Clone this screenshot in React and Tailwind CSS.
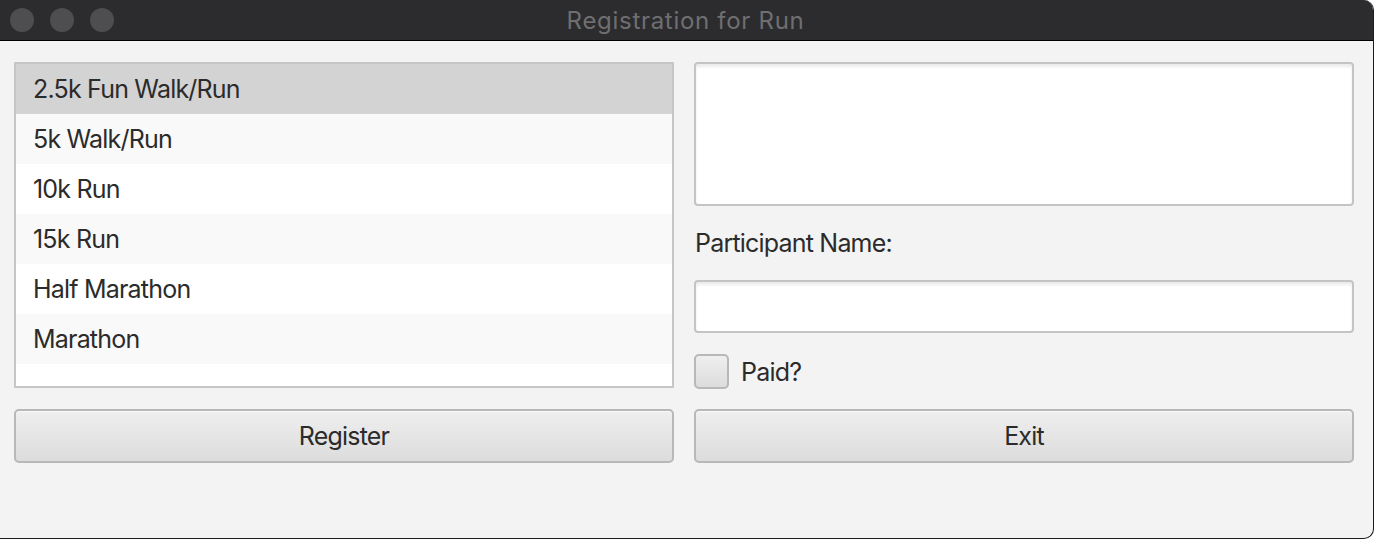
import React from "react";

const items = ["2.5k Fun Walk/Run", "5k Walk/Run", "10k Run", "15k Run", "Half Marathon", "Marathon"];
const rowBg = ["bg-[#d3d3d3]", "bg-[#f9f9f9]", "bg-white", "bg-[#f9f9f9]", "bg-white", "bg-[#f9f9f9]"];

export default function App() {
  return (
    <div className="w-[1376px] h-[540px] bg-white overflow-hidden" style={{ fontFamily: "Inter, 'Noto Sans', sans-serif" }}>
      <div className="w-[1374px] h-[539px] flex flex-col rounded-tr-[10px] rounded-br-[10px] border-r border-b border-[#1c1c1c] overflow-hidden bg-[#f3f3f3]">
        <div className="relative h-[41px] shrink-0 bg-[#2c2c2e] border-b border-black flex items-center justify-center">
          <div className="absolute left-[10px] top-[8px] flex gap-[16px]">
            <div className="w-[24px] h-[24px] rounded-full bg-[#4e4e50]" />
            <div className="w-[24px] h-[24px] rounded-full bg-[#4e4e50]" />
            <div className="w-[24px] h-[24px] rounded-full bg-[#4e4e50]" />
          </div>
          <span className="text-[24px] tracking-[0.7px] text-[#6f6f71] leading-none pr-[2px] pt-[2px]">Registration for Run</span>
        </div>
        <div className="flex-1 pt-[21px] pl-[14px] grid grid-cols-[660px_660px] gap-x-[20px] items-start text-[#2b2b2b] tracking-[-0.8px]">
          <div className="flex flex-col">
            <div className="h-[326px] border-2 border-[#c6c6c6] bg-white flex flex-col">
              {items.map((t, i) => (
                <div key={t} className={`h-[50px] shrink-0 flex items-center pl-[17px] pt-[2px] text-[25px] ${rowBg[i]}`}>
                  {t}
                </div>
              ))}
            </div>
            <button className="mt-[21px] h-[54px] pt-[2px] rounded-[5px] border-2 border-[#b8b8b8] bg-gradient-to-b from-[#efefef] to-[#dcdcdc] text-[25px] text-[#2b2b2b] tracking-[-0.8px] shadow-[inset_0_1px_0_#fafafa]">
              Register
            </button>
          </div>
          <div className="flex flex-col">
            <div className="h-[144px] rounded-[4px] border-2 border-[#c4c4c4] bg-white shadow-[inset_0_3px_3px_rgba(0,0,0,0.08)]" />
            <div className="mt-[22px] text-[25px] leading-[30px] pl-[1px]">Participant Name:</div>
            <div className="mt-[22px] h-[53px] rounded-[4px] border-2 border-[#c4c4c4] bg-white shadow-[inset_0_3px_3px_rgba(0,0,0,0.08)]" />
            <div className="mt-[21px] h-[35px] flex items-center">
              <div className="w-[35px] h-[35px] rounded-[5px] border-2 border-[#b8b8b8] bg-gradient-to-b from-[#efefef] to-[#dcdcdc]" />
              <span className="ml-[12px] text-[25px] pt-[2px]">Paid?</span>
            </div>
            <button className="mt-[20px] h-[54px] pt-[2px] rounded-[5px] border-2 border-[#b8b8b8] bg-gradient-to-b from-[#efefef] to-[#dcdcdc] text-[25px] text-[#2b2b2b] tracking-[-0.8px] shadow-[inset_0_1px_0_#fafafa]">
              Exit
            </button>
          </div>
        </div>
      </div>
    </div>
  );
}
